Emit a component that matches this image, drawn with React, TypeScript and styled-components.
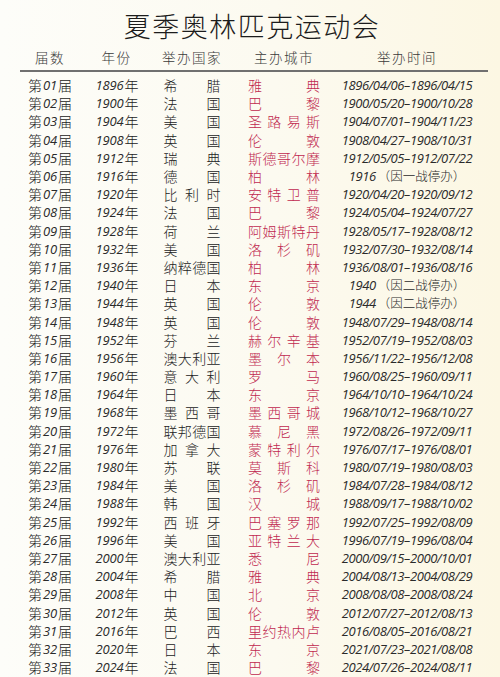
import React from "react";
import styled, { createGlobalStyle } from "styled-components";

const Global = createGlobalStyle`
  html, body { margin: 0; padding: 0; }
  body {
    width: 500px;
    height: 677px;
    overflow: hidden;
    background: linear-gradient(90deg, #fdfdf9 0%, #fcfaf0 55%, #fcf7e3 100%);
    font-family: "Noto Sans CJK SC", sans-serif;
    font-weight: 300;
    color: #222;
  }
`;

const Page = styled.div`
  width: 500px;
  height: 677px;
  display: flex;
  flex-direction: column;
`;

const Title = styled.h1`
  margin: 0;
  padding-top: 7px;
  height: 37px;
  text-align: center;
  font-family: "Noto Sans CJK SC", serif;
  font-weight: 300;
  font-size: 27px;
  line-height: 37px;
  letter-spacing: 1.5px;
  color: #1c1c1c;
  padding-left: 4px;
`;

const Grid = styled.div`
  display: grid;
  grid-template-columns: 60px 73px 78px 106px 140px;
  margin-left: 20px;
`;

const HeaderRow = styled(Grid)`
  height: 26px;
  align-items: center;
`;

const HeadCell = styled.div`
  justify-self: center;
  font-size: 13.5px;
  font-weight: 300;
  letter-spacing: 1.5px;
  color: #3a3a3a;
  line-height: 26px;
`;

const Rule = styled.div`
  margin-left: 20px;
  width: 468px;
  height: 2px;
  background: #707070;
  margin-bottom: 4px;
`;

const Row = styled(Grid)`
  height: 18.2px;
  align-items: center;
`;

const Cell = styled.div`
  justify-self: center;
  display: flex;
  align-items: center;
  white-space: nowrap;
  font-size: 14px;
  line-height: 18px;
`;

const Num = styled.span`
  font-family: "Open Sans", sans-serif;
  font-style: italic;
  font-weight: 400;
  font-size: 13px;
  letter-spacing: -0.2px;
  color: #2a2a2a;
  margin: 0 1px;
`;

const Spread = styled.div<{ $w: number; $red?: boolean }>`
  justify-self: center;
  width: ${(p) => p.$w}px;
  display: flex;
  justify-content: space-between;
  font-size: 14px;
  line-height: 18px;
  color: ${(p) => (p.$red ? "#c0284f" : "#222")};
`;

const DateText = styled.div`
  justify-self: center;
  font-family: "Open Sans", sans-serif;
  font-style: italic;
  font-weight: 400;
  font-size: 13px;
  letter-spacing: -0.4px;
  line-height: 18px;
  color: #2a2a2a;
  white-space: nowrap;
  display: flex;
  align-items: center;
`;

const Note = styled.span`
  font-family: "Noto Sans CJK SC", sans-serif;
  font-style: normal;
  font-weight: 300;
  font-size: 12.5px;
  letter-spacing: 0;
  margin-left: 2px;
`;

type Item = [number, string, string, string];

const data: Item[] = [
  [1896, "希腊", "雅典", "1896/04/06–1896/04/15"],
  [1900, "法国", "巴黎", "1900/05/20–1900/10/28"],
  [1904, "美国", "圣路易斯", "1904/07/01–1904/11/23"],
  [1908, "英国", "伦敦", "1908/04/27–1908/10/31"],
  [1912, "瑞典", "斯德哥尔摩", "1912/05/05–1912/07/22"],
  [1916, "德国", "柏林", "1916|（因一战停办）"],
  [1920, "比利时", "安特卫普", "1920/04/20–1920/09/12"],
  [1924, "法国", "巴黎", "1924/05/04–1924/07/27"],
  [1928, "荷兰", "阿姆斯特丹", "1928/05/17–1928/08/12"],
  [1932, "美国", "洛杉矶", "1932/07/30–1932/08/14"],
  [1936, "纳粹德国", "柏林", "1936/08/01–1936/08/16"],
  [1940, "日本", "东京", "1940|（因二战停办）"],
  [1944, "英国", "伦敦", "1944|（因二战停办）"],
  [1948, "英国", "伦敦", "1948/07/29–1948/08/14"],
  [1952, "芬兰", "赫尔辛基", "1952/07/19–1952/08/03"],
  [1956, "澳大利亚", "墨尔本", "1956/11/22–1956/12/08"],
  [1960, "意大利", "罗马", "1960/08/25–1960/09/11"],
  [1964, "日本", "东京", "1964/10/10–1964/10/24"],
  [1968, "墨西哥", "墨西哥城", "1968/10/12–1968/10/27"],
  [1972, "联邦德国", "慕尼黑", "1972/08/26–1972/09/11"],
  [1976, "加拿大", "蒙特利尔", "1976/07/17–1976/08/01"],
  [1980, "苏联", "莫斯科", "1980/07/19–1980/08/03"],
  [1984, "美国", "洛杉矶", "1984/07/28–1984/08/12"],
  [1988, "韩国", "汉城", "1988/09/17–1988/10/02"],
  [1992, "西班牙", "巴塞罗那", "1992/07/25–1992/08/09"],
  [1996, "美国", "亚特兰大", "1996/07/19–1996/08/04"],
  [2000, "澳大利亚", "悉尼", "2000/09/15–2000/10/01"],
  [2004, "希腊", "雅典", "2004/08/13–2004/08/29"],
  [2008, "中国", "北京", "2008/08/08–2008/08/24"],
  [2012, "英国", "伦敦", "2012/07/27–2012/08/13"],
  [2016, "巴西", "里约热内卢", "2016/08/05–2016/08/21"],
  [2020, "日本", "东京", "2021/07/23–2021/08/08"],
  [2024, "法国", "巴黎", "2024/07/26–2024/08/11"],
];

const chars = (s: string) =>
  Array.from(s).map((c, i) => <span key={i}>{c}</span>);

export default function App() {
  return (
    <Page>
      <Global />
      <Title>夏季奥林匹克运动会</Title>
      <HeaderRow>
        <HeadCell>届数</HeadCell>
        <HeadCell>年份</HeadCell>
        <HeadCell>举办国家</HeadCell>
        <HeadCell>主办城市</HeadCell>
        <HeadCell>举办时间</HeadCell>
      </HeaderRow>
      <Rule />
      {data.map(([year, country, city, date], i) => {
        const n = String(i + 1).padStart(2, "0");
        const [d, note] = date.split("|");
        return (
          <Row key={i}>
            <Cell>
              第<Num>{n}</Num>届
            </Cell>
            <Cell>
              <Num>{year}</Num>年
            </Cell>
            <Spread $w={57}>{chars(country)}</Spread>
            <Spread $w={72} $red>
              {chars(city)}
            </Spread>
            <DateText>
              {d}
              {note && <Note>{note}</Note>}
            </DateText>
          </Row>
        );
      })}
    </Page>
  );
}
